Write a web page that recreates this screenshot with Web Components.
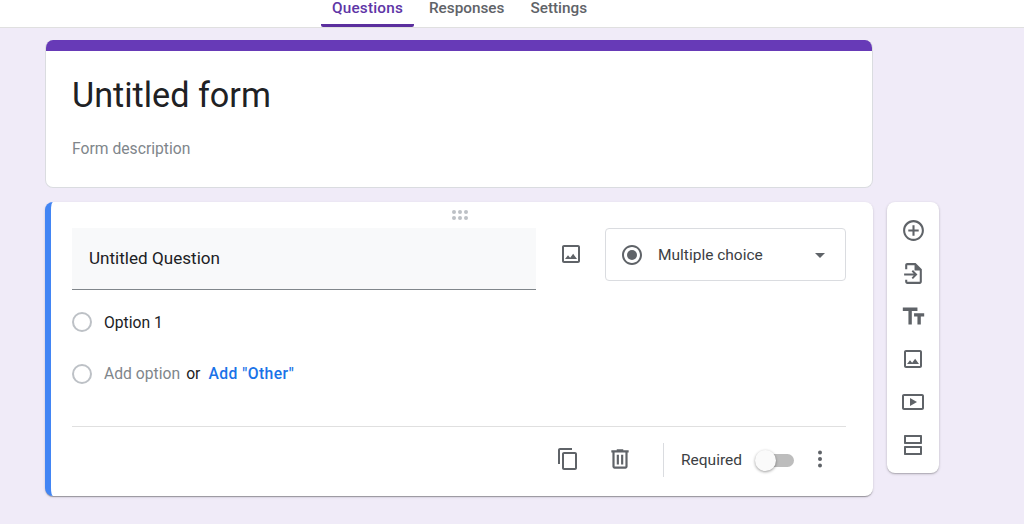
<!DOCTYPE html>
<html lang="en">
<head>
<meta charset="utf-8">
<title>Untitled form</title>
<style>
  html, body { margin: 0; padding: 0; height: 100%; overflow: hidden; }
  body { background: #f0ebf8; font-family: Roboto, "Liberation Sans", sans-serif; color: #202124; }
</style>
</head>
<body>
<form-tabs>
  <tab-link active>Questions</tab-link>
  <tab-link>Responses</tab-link>
  <tab-link>Settings</tab-link>
</form-tabs>
<form-page>
  <title-card heading="Untitled form" description="Form description"></title-card>
  <question-card>
    <question-field slot="title">Untitled Question</question-field>
    <radio-row>Option 1</radio-row>
    <radio-row add>Add option</radio-row>
  </question-card>
  <side-toolbar slot="tools"></side-toolbar>
</form-page>

<script>
const ICONS = {
  add: '<path d="M13 7h-2v4H7v2h4v4h2v-4h4v-2h-4V7zm-1-5C6.48 2 2 6.48 2 12s4.48 10 10 10 10-4.48 10-10S17.52 2 12 2zm0 18c-4.41 0-8-3.59-8-8s3.59-8 8-8 8 3.59 8 8-3.59 8-8 8z"/>',
  importFile: '<path d="M6 2h8l6 6v12c0 1.1-.9 2-2 2H6c-1.1 0-2-.9-2-2v-2h2v2h12V9h-5V4H6v4H4V4c0-1.1.9-2 2-2z"/><path d="M3 12h9.2l-2-2 1.3-1.3 4.3 4.3-4.3 4.3-1.3-1.3 2-2H3z"/>',
  title: '<path d="M2.5 4v3h5v12h3V7h5V4h-13zm19 5h-9v3h3v7h3v-7h3V9z"/>',
  image: '<path d="M19 5v14H5V5h14m0-2H5c-1.1 0-2 .9-2 2v14c0 1.1.9 2 2 2h14c1.1 0 2-.9 2-2V5c0-1.1-.9-2-2-2zm-4.86 8.86l-3 3.87L9 13.14 6 17h12l-3.86-5.14z"/>',
  video: '<path d="M21 4H3c-1.1 0-2 .9-2 2v12c0 1.1.9 2 2 2h18c1.1 0 2-.9 2-2V6c0-1.1-.9-2-2-2zm0 14H3V6h18v12z"/><path d="M9 8v8l7-4z"/>',
  section: '<path d="M20 2H4c-.6 0-1 .4-1 1v7c0 .6.4 1 1 1h16c.6 0 1-.4 1-1V3c0-.6-.4-1-1-1zm-1 7H5V4h14v5zM20 13H4c-.6 0-1 .4-1 1v7c0 .6.4 1 1 1h16c.6 0 1-.4 1-1v-7c0-.6-.4-1-1-1zm-1 7H5v-5h14v5z"/>',
  copy: '<path d="M16 1H4c-1.1 0-2 .9-2 2v14h2V3h12V1zm3 4H8c-1.1 0-2 .9-2 2v14c0 1.1.9 2 2 2h11c1.1 0 2-.9 2-2V7c0-1.1-.9-2-2-2zm0 16H8V7h11v14z"/>',
  trash: '<path d="M15 4V3H9v1H4v2h1v13c0 1.1.9 2 2 2h10c1.1 0 2-.9 2-2V6h1V4h-5zm2 15H7V6h10v13z"/><path d="M9 8h2v9H9zM13 8h2v9h-2z"/>',
  more: '<circle cx="12" cy="5.5" r="2"/><circle cx="12" cy="12" r="2"/><circle cx="12" cy="18.5" r="2"/>',
  radio: '<path d="M12 2C6.48 2 2 6.48 2 12s4.48 10 10 10 10-4.48 10-10S17.52 2 12 2zm0 18c-4.42 0-8-3.58-8-8s3.58-8 8-8 8 3.58 8 8-3.58 8-8 8z"/><circle cx="12" cy="12" r="5"/>',
  arrow: '<path d="M7 10l5 5 5-5z"/>'
};

class GIcon extends HTMLElement {
  connectedCallback() {
    const size = this.getAttribute('size') || 24;
    this.attachShadow({ mode: 'open' }).innerHTML = `
      <style>
        :host { display: flex; align-items: center; justify-content: center; flex: none; width: 24px; height: 24px; }
        svg { display: block; flex: none; fill: #5f6368; }
      </style>
      <svg width="${size}" height="${size}" viewBox="0 0 24 24">${ICONS[this.getAttribute('name')]}</svg>
    `;
  }
}
customElements.define('g-icon', GIcon);

class FormTabs extends HTMLElement {
  constructor() {
    super();
    this.attachShadow({ mode: 'open' }).innerHTML = `
      <style>
        :host {
          display: flex;
          box-sizing: border-box;
          height: 28px;
          padding-left: 321px;
          background: #fff;
          border-bottom: 1px solid #e0e0e0;
        }
      </style>
      <slot></slot>
    `;
  }
}
customElements.define('form-tabs', FormTabs);

class TabLink extends HTMLElement {
  constructor() {
    super();
    this.attachShadow({ mode: 'open' }).innerHTML = `
      <style>
        :host {
          display: block;
          box-sizing: border-box;
          height: 27px;
          padding: 0 11px;
          margin-right: 4px;
          font: 500 15.3px/17px Roboto, "Liberation Sans", sans-serif;
          color: #5f6368;
        }
        :host([active]) {
          color: #5e35a6;
          border-bottom: 3px solid #5b2f9e;
          border-radius: 0 0 2px 2px;
          letter-spacing: .2px;
        }
      </style>
      <slot></slot>
    `;
  }
}
customElements.define('tab-link', TabLink);

class FormPage extends HTMLElement {
  constructor() {
    super();
    this.attachShadow({ mode: 'open' }).innerHTML = `
      <style>
        :host {
          display: grid;
          grid-template-columns: 828px 52px;
          column-gap: 14px;
          row-gap: 14px;
          padding: 12px 0 0 45px;
        }
        .cards { display: flex; flex-direction: column; gap: 14px; }
        .tools { padding-top: 162px; }
      </style>
      <div class="cards"><slot></slot></div>
      <div class="tools"><slot name="tools"></slot></div>
    `;
  }
}
customElements.define('form-page', FormPage);

class TitleCard extends HTMLElement {
  connectedCallback() {
    this.attachShadow({ mode: 'open' }).innerHTML = `
      <style>
        :host {
          display: block;
          box-sizing: border-box;
          height: 148px;
          background: #fff;
          border: 1px solid #dadce0;
          border-top: 0;
          border-radius: 8px;
          overflow: hidden;
        }
        .bar { height: 11px; background: #673ab7; margin: 0 -1px; }
        h1 {
          margin: 24px 0 0 26px;
          font: 400 34.2px/40px Roboto, "Liberation Sans", sans-serif;
          color: #202124;
        }
        p {
          margin: 24px 0 0 26px;
          font: 400 15.7px/20px Roboto, "Liberation Sans", sans-serif;
          color: #80868b;
        }
      </style>
      <div class="bar"></div>
      <h1>${this.getAttribute('heading')}</h1>
      <p>${this.getAttribute('description')}</p>
    `;
  }
}
customElements.define('title-card', TitleCard);

class QuestionField extends HTMLElement {
  constructor() {
    super();
    this.attachShadow({ mode: 'open' }).innerHTML = `
      <style>
        :host {
          display: flex;
          align-items: center;
          box-sizing: border-box;
          width: 464px;
          height: 62px;
          padding: 0 17px 2px;
          background: #f8f9fa;
          border-bottom: 1px solid #80868b;
          font: 400 17.1px/20px Roboto, "Liberation Sans", sans-serif;
          color: #202124;
        }
      </style>
      <slot></slot>
    `;
  }
}
customElements.define('question-field', QuestionField);

class RadioRow extends HTMLElement {
  constructor() {
    super();
    this.attachShadow({ mode: 'open' }).innerHTML = `
      <style>
        :host {
          display: flex;
          align-items: center;
          height: 36px;
          font: 400 15.7px/20px Roboto, "Liberation Sans", sans-serif;
          color: #202124;
        }
        :host([add]) { margin-top: 16px; }
        :host([add]) .label { color: #80868b; padding-top: 0; }
        .label { padding-top: 2px; }
        .ring {
          box-sizing: border-box;
          width: 20px;
          height: 20px;
          margin-right: 12px;
          border: 2px solid #bdc1c6;
          border-radius: 50%;
        }
        .extra { display: none; margin-left: 6px; }
        :host([add]) .extra { display: inline; }
        a { margin-left: 8px; color: #1a73e8; font-weight: 500; font-size: 15.7px; letter-spacing: .45px; }
      </style>
      <div class="ring"></div>
      <span class="label"><slot></slot></span>
      <span class="extra">or<a>Add "Other"</a></span>
    `;
  }
}
customElements.define('radio-row', RadioRow);

class ToggleSwitch extends HTMLElement {
  constructor() {
    super();
    this.attachShadow({ mode: 'open' }).innerHTML = `
      <style>
        :host { display: block; position: relative; width: 29px; height: 13px; margin-top: 2px; }
        .track { width: 29px; height: 13px; border-radius: 7px; background: #bdbdbd; }
        .thumb {
          position: absolute;
          left: -10px;
          top: -4px;
          width: 21px;
          height: 21px;
          border-radius: 50%;
          background: #fafafa;
          box-shadow: 0 1px 3px rgba(0,0,0,.4);
        }
      </style>
      <div class="track"></div>
      <div class="thumb"></div>
    `;
  }
}
customElements.define('toggle-switch', ToggleSwitch);

class TypeSelect extends HTMLElement {
  constructor() {
    super();
    this.attachShadow({ mode: 'open' }).innerHTML = `
      <style>
        :host {
          display: flex;
          align-items: center;
          box-sizing: border-box;
          width: 241px;
          height: 53px;
          padding: 0 13px 0 14px;
          background: #fff;
          border: 1px solid #dadce0;
          border-radius: 4px;
          font: 400 15.5px/20px Roboto, "Liberation Sans", sans-serif;
          color: #3c4043;
        }
        span { margin-left: 14px; flex: 1; }
      </style>
      <g-icon name="radio" size="24"></g-icon>
      <span>Multiple choice</span>
      <g-icon name="arrow" size="24"></g-icon>
    `;
  }
}
customElements.define('type-select', TypeSelect);

class QuestionCard extends HTMLElement {
  constructor() {
    super();
    this.attachShadow({ mode: 'open' }).innerHTML = `
      <style>
        :host {
          display: block;
          position: relative;
          box-sizing: border-box;
          height: 294px;
          padding: 26px 27px 0 21px;
          background: #fff;
          border-left: 6px solid #4285f4;
          border-radius: 8px;
          box-shadow: 0 2px 1px -1px rgba(0,0,0,.2), 0 1px 1px 0 rgba(0,0,0,.14), 0 1px 3px 0 rgba(0,0,0,.12);
        }
        .drag {
          position: absolute;
          left: 401px;
          top: 8px;
          display: grid;
          grid-template-columns: repeat(3, 4px);
          gap: 2px 2px;
        }
        .drag i { width: 4px; height: 4px; border-radius: 50%; background: #bdc1c6; }
        .top { display: flex; align-items: flex-start; }
        .image { width: 24px; height: 24px; margin: 14px 22px 0 23px; }
        .options { padding-top: 14px; }
        .footer {
          display: flex;
          align-items: center;
          height: 64px;
          margin-top: 34px;
          padding-right: 14px;
          border-top: 1px solid #e0e0e0;
          font: 400 15.5px/20px Roboto, "Liberation Sans", sans-serif;
          color: #3c4043;
        }
        .spacer { flex: 1; }
        .sep { width: 1px; height: 34px; margin: 2px 17px 0 31px; background: #dadce0; }
        .required { margin: 2px 23px 0 0; }
        g-icon.trash { margin-left: 28px; }
        g-icon.more { margin-left: 14px; }
      </style>
      <div class="drag"><i></i><i></i><i></i><i></i><i></i><i></i></div>
      <div class="top">
        <slot name="title"></slot>
        <g-icon class="image" name="image"></g-icon>
        <type-select></type-select>
      </div>
      <div class="options"><slot></slot></div>
      <div class="footer">
        <span class="spacer"></span>
        <g-icon name="copy"></g-icon>
        <g-icon class="trash" name="trash" size="26"></g-icon>
        <div class="sep"></div>
        <span class="required">Required</span>
        <toggle-switch></toggle-switch>
        <g-icon class="more" name="more"></g-icon>
      </div>
    `;
  }
}
customElements.define('question-card', QuestionCard);

class SideToolbar extends HTMLElement {
  constructor() {
    super();
    const tools = [['add', 25], ['importFile', 25], ['title', 27], ['image', 24], ['video', 24], ['section', 24]];
    this.attachShadow({ mode: 'open' }).innerHTML = `
      <style>
        :host {
          display: flex;
          flex-direction: column;
          align-items: center;
          gap: 19px;
          box-sizing: border-box;
          width: 52px;
          height: 271px;
          padding-top: 16px;
          background: #fff;
          border-radius: 8px;
          box-shadow: 0 1px 1px 0 rgba(0,0,0,.14), 0 1px 3px 0 rgba(0,0,0,.2);
        }
      </style>
      ${tools.map(([n, s]) => `<g-icon name="${n}" size="${s}"></g-icon>`).join('')}
    `;
  }
}
customElements.define('side-toolbar', SideToolbar);
</script>
</body>
</html>
